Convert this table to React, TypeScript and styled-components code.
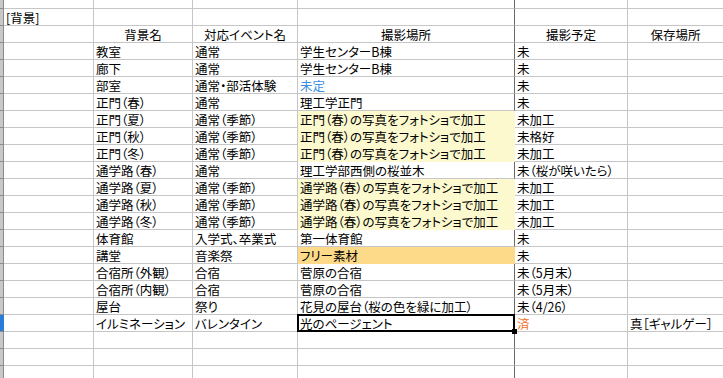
import React from "react";
import styled, { createGlobalStyle, css } from "styled-components";

const GlobalStyle = createGlobalStyle`
  html, body {
    margin: 0;
    padding: 0;
    background: #fff;
    overflow: hidden;
  }
`;

type Col = "a" | "b" | "c" | "d" | "e" | "f";

// column F runs past the window edge; its right gridline lands just outside
const widths: Record<Col, number> = { a: 90, b: 99, c: 105, d: 217, e: 113, f: 96 };

const GRID = "#c6c6c6";
const EDGE = "#6a6a6a";
const YELLOW = "#fcf9cf";
const GOLD = "#fdd98a";
const BLUE_TEXT = "#3b8fe2";
const ORANGE_TEXT = "#f2711f";

const Sheet = styled.div`
  width: 723px;
  height: 378px;
  overflow: hidden;
  background: #fff;
  display: flex;
  flex-direction: column;
  font-family: "Noto Sans CJK JP", "Noto Sans", sans-serif;
  font-size: 12.5px;
  font-feature-settings: "palt";
  color: #000;
`;

const Row = styled.div<{ $short?: boolean }>`
  display: flex;
  flex: none;
  height: ${(p) => (p.$short ? 9 : 17)}px;
`;

const RowHead = styled.div<{ $active?: boolean }>`
  flex: none;
  width: 4px;
  box-sizing: border-box;
  background: ${(p) => (p.$active ? "#2b7cd8" : "#c8c8c8")};
  border-right: 1px solid ${(p) => (p.$active ? "#2b7cd8" : "#8c8c8c")};
  border-bottom: 1px solid #8c8c8c;
`;

const Cell = styled.div<{
  $col: Col;
  $fill?: string;
  $center?: boolean;
  $tone?: string;
  $selected?: boolean;
}>`
  position: relative;
  flex: none;
  width: ${(p) => widths[p.$col]}px;
  box-sizing: border-box;
  padding: 1px 2px 0;
  line-height: 15px;
  white-space: nowrap;
  overflow: ${(p) => (p.$selected ? "visible" : "hidden")};
  text-align: ${(p) => (p.$center ? "center" : "left")};
  color: ${(p) => p.$tone ?? "#000"};
  background: ${(p) => p.$fill ?? "transparent"};
  border-right: 1px solid ${(p) => p.$fill ?? (p.$col === "d" ? EDGE : GRID)};
  border-bottom: 1px solid ${(p) => p.$fill ?? GRID};

  ${(p) =>
    p.$selected &&
    css`
      &::after {
        content: "";
        position: absolute;
        left: -1px;
        top: -1px;
        right: -1px;
        bottom: -1px;
        border: 2px solid #000;
        pointer-events: none;
      }
      &::before {
        content: "";
        position: absolute;
        right: -3px;
        bottom: -3px;
        width: 5px;
        height: 5px;
        background: #000;
        z-index: 1;
      }
    `}
`;

interface Entry {
  name: string;
  event: string;
  place: string;
  placeTone?: string;
  placeFill?: string;
  plan: string;
  planTone?: string;
  store?: string;
  selected?: boolean;
}

const FOTO_GATE = "正門（春）の写真をフォトショで加工";
const FOTO_ROAD = "通学路（春）の写真をフォトショで加工";

const entries: Entry[] = [
  { name: "教室", event: "通常", place: "学生センターB棟", plan: "未" },
  { name: "廊下", event: "通常", place: "学生センターB棟", plan: "未" },
  { name: "部室", event: "通常・部活体験", place: "未定", placeTone: BLUE_TEXT, plan: "未" },
  { name: "正門（春）", event: "通常", place: "理工学正門", plan: "未" },
  { name: "正門（夏）", event: "通常（季節）", place: FOTO_GATE, placeFill: YELLOW, plan: "未加工" },
  { name: "正門（秋）", event: "通常（季節）", place: FOTO_GATE, placeFill: YELLOW, plan: "未格好" },
  { name: "正門（冬）", event: "通常（季節）", place: FOTO_GATE, placeFill: YELLOW, plan: "未加工" },
  { name: "通学路（春）", event: "通常", place: "理工学部西側の桜並木", plan: "未（桜が咲いたら）" },
  { name: "通学路（夏）", event: "通常（季節）", place: FOTO_ROAD, placeFill: YELLOW, plan: "未加工" },
  { name: "通学路（秋）", event: "通常（季節）", place: FOTO_ROAD, placeFill: YELLOW, plan: "未加工" },
  { name: "通学路（冬）", event: "通常（季節）", place: FOTO_ROAD, placeFill: YELLOW, plan: "未加工" },
  { name: "体育館", event: "入学式、卒業式", place: "第一体育館", plan: "未" },
  { name: "講堂", event: "音楽祭", place: "フリー素材", placeFill: GOLD, plan: "未" },
  { name: "合宿所（外観）", event: "合宿", place: "菅原の合宿", plan: "未（5月末）" },
  { name: "合宿所（内観）", event: "合宿", place: "菅原の合宿", plan: "未（5月末）" },
  { name: "屋台", event: "祭り", place: "花見の屋台（桜の色を緑に加工）", plan: "未（4/26）" },
  {
    name: "イルミネーション",
    event: "バレンタイン",
    place: "光のページェント",
    selected: true,
    plan: "済",
    planTone: ORANGE_TEXT,
    store: "真［ギャルゲー］",
  },
];

const EmptyRow = ({ short }: { short?: boolean }) => (
  <Row $short={short}>
    <RowHead />
    <Cell $col="a" />
    <Cell $col="b" />
    <Cell $col="c" />
    <Cell $col="d" />
    <Cell $col="e" />
    <Cell $col="f" />
  </Row>
);

export default function App() {
  return (
    <>
      <GlobalStyle />
      <Sheet>
        <EmptyRow short />
        <Row>
          <RowHead />
          <Cell $col="a">[背景]</Cell>
          <Cell $col="b" />
          <Cell $col="c" />
          <Cell $col="d" />
          <Cell $col="e" />
          <Cell $col="f" />
        </Row>
        <Row>
          <RowHead />
          <Cell $col="a" />
          <Cell $col="b" $center>背景名</Cell>
          <Cell $col="c" $center>対応イベント名</Cell>
          <Cell $col="d" $center>撮影場所</Cell>
          <Cell $col="e" $center>撮影予定</Cell>
          <Cell $col="f" $center>保存場所</Cell>
        </Row>
        {entries.map((e) => (
          <Row key={e.name}>
            <RowHead $active={e.selected} />
            <Cell $col="a" />
            <Cell $col="b">{e.name}</Cell>
            <Cell $col="c">{e.event}</Cell>
            <Cell $col="d" $tone={e.placeTone} $fill={e.placeFill} $selected={e.selected}>
              {e.place}
            </Cell>
            <Cell $col="e" $tone={e.planTone}>{e.plan}</Cell>
            <Cell $col="f">{e.store}</Cell>
          </Row>
        ))}
        <EmptyRow />
        <EmptyRow />
        <EmptyRow />
      </Sheet>
    </>
  );
}
